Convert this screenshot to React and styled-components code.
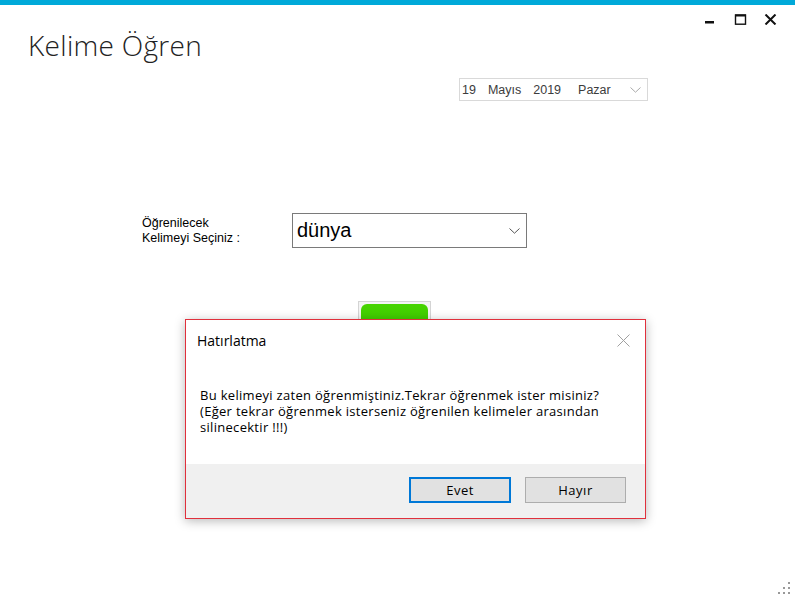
import React from 'react';
import styled, { createGlobalStyle } from 'styled-components';

const GlobalStyle = createGlobalStyle`
    body{
        margin:0;
        background:#fff;
    }
    *{
        box-sizing:border-box;
    }
`;

const Window = styled.div`
    position:relative;
    width:795px;
    height:597px;
    background:#fff;
    border-top:5px solid #00a9d9;
    overflow:hidden;
    font-family:"Liberation Sans", Arial, sans-serif;
`;

const TitleBar = styled.div`
    display:flex;
    justify-content:space-between;
    align-items:flex-start;
    height:73px;
    padding:0 18px 0 28px;
`;

const AppTitle = styled.h1`
    margin:24px 0 0;
    font-family:"Open Sans", sans-serif;
    font-weight:300;
    font-size:28px;
    letter-spacing:0.3px;
    line-height:32px;
    color:#222;
`;

const Controls = styled.div`
    display:flex;
    gap:17px;
    margin-top:9px;
`;

const ControlIcon = styled.svg`
    width:13px;
    height:11px;
    display:block;
`;

const DateRow = styled.div`
    display:flex;
    padding-left:459px;
`;

const DatePicker = styled.div`
    display:flex;
    align-items:center;
    gap:12px;
    width:189px;
    height:23px;
    padding:0 6px 0 2px;
    border:1px solid #d9d9d9;
    font-size:12.5px;
    color:#3c3c3c;
`;

const DatePart = styled.span`
    margin-left:${p=>p.shift || 0}px;
    margin-right:${p=>p.last ? 'auto' : '0'};
`;

const FormRow = styled.div`
    display:flex;
    align-items:center;
    margin-top:112px;
    padding-left:142px;
`;

const Label = styled.label`
    width:150px;
    font-size:12.5px;
    line-height:15px;
    color:#000;
`;

const Combo = styled.div`
    display:flex;
    align-items:center;
    justify-content:space-between;
    width:235px;
    height:35px;
    padding:0 6px 0 4px;
    border:1px solid #7a7a7a;
    font-size:20px;
    color:#000;
`;

const ButtonRow = styled.div`
    display:flex;
    margin-top:53px;
    padding-left:358px;
`;

const GreenFrame = styled.div`
    width:73px;
    height:44px;
    padding:2px;
    border:1px solid #d4d4d4;
    background:#f4f4f4;
`;

const GreenButton = styled.div`
    height:100%;
    border-radius:6px;
    background:linear-gradient(#47d400, #36c200);
`;

const Dialog = styled.div`
    position:absolute;
    left:185px;
    top:314px;
    width:461px;
    height:200px;
    display:flex;
    flex-direction:column;
    background:#fff;
    border:1px solid #e0303c;
    box-shadow:0 2px 10px rgba(0,0,0,0.28);
    font-family:"Open Sans", "Noto Sans", sans-serif;
    font-size:13px;
    letter-spacing:0.3px;
    color:#000;
`;

const DialogHeader = styled.div`
    display:flex;
    justify-content:space-between;
    align-items:center;
    height:40px;
    padding:0 15px 0 11px;
    font-size:14px;
    letter-spacing:0;
`;

const DialogBody = styled.div`
    flex:1;
    padding:27px 14px 0;
    line-height:16px;
`;

const DialogFooter = styled.div`
    display:flex;
    justify-content:flex-end;
    gap:14px;
    height:54px;
    padding:13px 19px 0 0;
    background:#f0f0f0;
`;

const DialogButton = styled.button`
    width:${p=>p.primary ? '102px' : '101px'};
    height:26px;
    padding:0;
    border:${p=>p.primary ? '2px solid #0078d7' : '1px solid #adadad'};
    background:#e1e1e1;
    font-family:inherit;
    font-size:13px;
    letter-spacing:0.5px;
    color:#000;
`;

const Grip = styled.svg`
    position:absolute;
    right:5px;
    bottom:3px;
    width:12px;
    height:12px;
`;

function Chevron({w=11, h=6, color='#888'}){
    return (
        <svg width={w} height={h} viewBox="0 0 11 6">
            <path d="M0.5 0.5 L5.5 5.2 L10.5 0.5" fill="none" stroke={color} strokeWidth="1" />
        </svg>
    );
}

function App(){
    return (
        <Window>
            <GlobalStyle />
            <TitleBar>
                <AppTitle>Kelime Öğren</AppTitle>
                <Controls>
                    <ControlIcon viewBox="0 0 13 11">
                        <rect x="1" y="7" width="9" height="2.5" fill="#111" />
                    </ControlIcon>
                    <ControlIcon viewBox="0 0 13 11">
                        <rect x="1.5" y="1" width="10" height="9.2" fill="none" stroke="#111" strokeWidth="1.4" />
                        <rect x="1" y="0.5" width="11" height="2" fill="#111" />
                    </ControlIcon>
                    <ControlIcon viewBox="0 0 13 11">
                        <path d="M1.5 0.5 L11.5 10.5 M11.5 0.5 L1.5 10.5" stroke="#111" strokeWidth="2" />
                    </ControlIcon>
                </Controls>
            </TitleBar>

            <DateRow>
                <DatePicker>
                    <DatePart>19</DatePart>
                    <DatePart>Mayıs</DatePart>
                    <DatePart>2019</DatePart>
                    <DatePart shift={5} last>Pazar</DatePart>
                    <Chevron color="#aaa" />
                </DatePicker>
            </DateRow>

            <FormRow>
                <Label>Öğrenilecek<br />Kelimeyi Seçiniz :</Label>
                <Combo>
                    <span>dünya</span>
                    <Chevron color="#555" />
                </Combo>
            </FormRow>

            <ButtonRow>
                <GreenFrame>
                    <GreenButton />
                </GreenFrame>
            </ButtonRow>

            <Dialog>
                <DialogHeader>
                    <span>Hatırlatma</span>
                    <svg width="13" height="13" viewBox="0 0 13 13">
                        <path d="M0.5 0.5 L12.5 12.5 M12.5 0.5 L0.5 12.5" stroke="#a0a0a0" strokeWidth="1" />
                    </svg>
                </DialogHeader>
                <DialogBody>
                    Bu kelimeyi zaten öğrenmiştiniz.Tekrar öğrenmek ister misiniz?<br />
                    (Eğer tekrar öğrenmek isterseniz öğrenilen kelimeler arasından<br />
                    silinecektir !!!)
                </DialogBody>
                <DialogFooter>
                    <DialogButton primary>Evet</DialogButton>
                    <DialogButton>Hayır</DialogButton>
                </DialogFooter>
            </Dialog>

            <Grip viewBox="0 0 12 12">
                <rect x="10" y="0" width="2" height="2" fill="#999" />
                <rect x="5" y="5" width="2" height="2" fill="#999" />
                <rect x="10" y="5" width="2" height="2" fill="#999" />
                <rect x="0" y="10" width="2" height="2" fill="#999" />
                <rect x="5" y="10" width="2" height="2" fill="#999" />
                <rect x="10" y="10" width="2" height="2" fill="#999" />
            </Grip>
        </Window>
    );
}

export default App;
